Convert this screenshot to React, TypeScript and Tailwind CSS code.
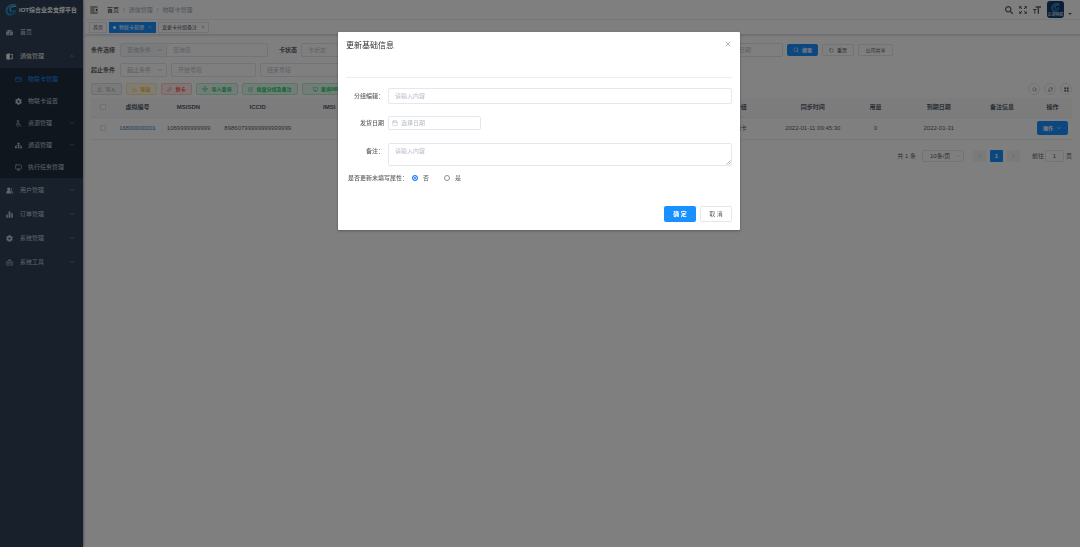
import React from "react";
import {
  Search, RotateCcw, RefreshCw, Upload, Download, Move, Calendar, X, ChevronDown, ChevronUp, ChevronLeft, ChevronRight,
  Link, SquarePen, Monitor, CreditCard,
} from "lucide-react";
import { FaTachometerAlt, FaCog, FaSitemap, FaSearch } from "react-icons/fa";
import { BsFillGridFill } from "react-icons/bs";

type Item = { label: string; icon: React.ReactNode; arrow?: "up" | "down"; bright?: boolean; active?: boolean };

const ic = "size-[7px] shrink-0";

function Glyph({ children, outline = false }: { children: React.ReactNode; outline?: boolean }) {
  return (
    <svg
      viewBox="0 0 24 24"
      className={ic}
      fill={outline ? "none" : "currentColor"}
      stroke={outline ? "currentColor" : "none"}
      strokeWidth="2"
      aria-hidden="true"
    >
      {children}
    </svg>
  );
}

const top: Item[] = [
  { label: "首页", icon: <FaTachometerAlt className={ic} /> },
  {
    label: "通信管理",
    icon: (
      <Glyph>
        <path d="M1 3l12-2v22L1 21z" />
        <path d="M15 3h8v18h-8v-3h5V6h-5z" />
      </Glyph>
    ),
    arrow: "up",
    bright: true,
  },
];
const sub: Item[] = [
  { label: "物联卡管理", icon: <CreditCard className={ic} />, active: true },
  { label: "物联卡设置", icon: <FaCog className={ic} /> },
  {
    label: "资源管理",
    icon: (
      <Glyph outline>
        <circle cx="10" cy="4" r="3" />
        <path d="M10 7v9h7l3 7M10 11h6M6 11c-4 5-1 12 6 11" />
      </Glyph>
    ),
    arrow: "down",
  },
  { label: "通道管理", icon: <FaSitemap className={ic} />, arrow: "down" },
  { label: "执行任务管理", icon: <Monitor className={ic} /> },
];
const bottom: Item[] = [
  {
    label: "用户管理",
    icon: (
      <Glyph>
        <path d="M9 2c3 0 5 2 5 5 0 2-1 4-2 5l5 4v6H1v-6l5-4c-1-1-2-3-2-5 0-3 2-5 5-5z" />
        <path d="M16 3c3 0 4 2 4 4s-1 4-2 5l5 4v6h-4v-7l-4-3c2-3 2-6 1-9z" />
      </Glyph>
    ),
    arrow: "down",
  },
  {
    label: "订单管理",
    icon: (
      <Glyph>
        <path d="M1 12h5v11H1zM9 2h6v21H9zM18 8h5v15h-5z" />
      </Glyph>
    ),
    arrow: "down",
  },
  { label: "系统管理", icon: <FaCog className={ic} />, arrow: "down" },
  {
    label: "系统工具",
    icon: (
      <Glyph outline>
        <path d="M2 21V11l4-5h12l4 5v10zM8 6V3h8v3M2 13h6M16 13h6" />
        <circle cx="12" cy="13" r="3" />
      </Glyph>
    ),
    arrow: "down",
  },
];

function MenuItem({ item, nested = false }: { item: Item; nested?: boolean }) {
  const color = item.active ? "text-[#1890ff]" : item.bright ? "text-[#f4f4f5]" : "text-[#bfcbd9]";
  return (
    <li>
      <a
        href="#"
        className={`flex items-center pr-2 ${color} ${nested ? "h-[22px] gap-[6px] pl-[15px]" : "h-6 gap-[7px] pl-[6px]"}`}
      >
        {item.icon}
        <span className="flex-1 whitespace-nowrap">{item.label}</span>
        {item.arrow === "up" && <ChevronUp className="size-[6px] text-[#a3abb8]" />}
        {item.arrow === "down" && <ChevronDown className="size-[6px] text-[#a3abb8]" />}
      </a>
    </li>
  );
}

function Swirl({ className }: { className: string }) {
  return (
    <svg viewBox="0 0 24 24" className={className} fill="none" strokeLinecap="round" aria-hidden="true">
      <path d="M20 2C11 0 3 6 3 14c0 5 4 8 9 7" stroke="#2b8bc9" strokeWidth="4" />
      <path d="M22 5c-8-1-12 2-12 6 0 4 4 5 7 3" stroke="#57b8e8" strokeWidth="2.5" />
      <path d="M12 22c6-1 9-5 9-10-1 3-4 4-7 3" stroke="#1d6fb0" strokeWidth="3" />
    </svg>
  );
}

function Sidebar() {
  return (
    <aside className="w-[83px] shrink-0 bg-[#304156] shadow-[1px_0_2px_rgba(0,21,41,0.35)]">
      <div className="flex h-5 items-center gap-[2px] pl-[5px]">
        <Swirl className="size-3 shrink-0" />
        <h1 className="whitespace-nowrap font-bold text-white">IOT综合业务支撑平台</h1>
      </div>
      <nav>
        <ul>{top.map((i) => <MenuItem key={i.label} item={i} />)}</ul>
        <ul className="bg-[#1f2d3d]">{sub.map((i) => <MenuItem key={i.label} item={i} nested />)}</ul>
        <ul>{bottom.map((i) => <MenuItem key={i.label} item={i} />)}</ul>
      </nav>
    </aside>
  );
}

function TopBar() {
  return (
    <header>
      <div className="flex h-5 items-center border-b border-[#eef0f3] pl-[7px] pr-2">
        <button type="button" aria-label="折叠菜单" className="text-[#222]">
          <svg viewBox="0 0 24 24" className="size-2" fill="none" stroke="currentColor" strokeWidth="2.5" aria-hidden="true">
            <path d="M1 3h22M1 9h13M1 15h13M1 21h22" />
            <path d="M22 7v10l-6-5z" fill="currentColor" stroke="none" />
          </svg>
        </button>
        <nav aria-label="面包屑" className="ml-[9px] flex flex-1 gap-1 text-[#97a8be]">
          <a href="#" className="text-[#303133]">首页</a>
          <span>/</span>
          <span>通信管理</span>
          <span>/</span>
          <span>物联卡管理</span>
        </nav>
        <div className="flex items-center gap-[6px] text-[#5a5e66]">
          <FaSearch className="size-2" />
          <svg viewBox="0 0 24 24" className="size-2" fill="none" stroke="currentColor" strokeWidth="3" aria-hidden="true">
            <path d="M2 8V2h6M2 2l7 7M16 2h6v6M22 2l-7 7M22 16v6h-6M22 22l-7-7M8 22H2v-6M2 22l7-7" />
          </svg>
          <svg viewBox="0 0 24 24" className="size-2" fill="currentColor" aria-hidden="true">
            <path d="M8 1h16v4h-6v18h-4V5H8zM0 9h11v3H7v11H4V12H0z" />
          </svg>
          <div className="flex h-[17px] w-[17px] flex-col items-center justify-center rounded-[3px] bg-[#0f3d6b]">
            <Swirl className="size-[9px]" />
            <span className="text-[4px] leading-[5px] text-white">云湖物联</span>
          </div>
          <span className="-ml-[2px] mt-2 border-x-2 border-t-2 border-x-transparent border-t-[#5a5e66]" />
        </div>
      </div>
      <div className="flex h-[15px] items-center gap-[2px] border-b border-[#d8dce5] pl-[6px] shadow-[0_1px_2px_rgba(0,0,0,0.12)]">
        <a href="#" className="flex h-[11px] items-center border border-[#e4e7ed] px-[3px] text-[5px] text-[#495060]">首页</a>
        <a href="#" className="flex h-[11px] items-center gap-[3px] bg-[#1890ff] px-1 text-[5px] text-white">
          <span className="size-[3px] rounded-full bg-white" />
          物联卡管理
          <X className="ml-px size-[4px]" />
        </a>
        <a href="#" className="flex h-[11px] items-center gap-1 border border-[#e4e7ed] px-[3px] text-[5px] text-[#495060]">
          变更卡分组备注
          <X className="size-[4px]" />
        </a>
      </div>
    </header>
  );
}

const field = "h-[14px] min-w-0 rounded-[2px] border border-[#e4e7ed] bg-white px-[6px] placeholder:text-[#c0c4cc]";

function FilterSelect({ label, className, tint = false }: { label: string; className: string; tint?: boolean }) {
  return (
    <div className={`relative ${className}`}>
      <select
        aria-label={label}
        className={`block h-[14px] w-full appearance-none border border-[#e4e7ed] pl-[6px] text-[#b4bac4] ${tint ? "rounded-l-[2px] bg-[#f5f7fa]" : "rounded-[2px] bg-white"}`}
      >
        <option>{label}</option>
      </select>
      <ChevronDown className="pointer-events-none absolute right-1 top-1 size-[6px] text-[#a8adb8]" strokeWidth={2.5} />
    </div>
  );
}

const outline = "ml-1 flex h-3 items-center justify-center gap-[3px] rounded-[2px] border border-[#e4e7ed] text-[5px] text-[#606266]";

function Filters() {
  return (
    <form className="flex flex-col gap-[6px]">
      <div className="flex items-center">
        <label htmlFor="cond" className="w-[29px] shrink-0 whitespace-nowrap font-bold text-[#606266]">条件选择</label>
        <FilterSelect label="查询条件" className="w-[47px]" tint />
        <input id="cond" placeholder="查询值" className="-ml-px h-[14px] w-[102px] rounded-r-[2px] border border-[#e4e7ed] px-[6px] placeholder:text-[#c0c4cc]" />
        <label htmlFor="state" className="ml-[11px] w-[22px] whitespace-nowrap font-bold text-[#606266]">卡状态</label>
        <input id="state" placeholder="卡状态" className={`${field} w-[90px]`} />
        <div className="min-w-0 flex-1" />
        <input aria-label="到期日期" placeholder="到期日期" className={`${field} w-[63px]`} />
        <button type="button" className="ml-1 flex h-3 w-[31px] items-center justify-center gap-[3px] rounded-[2px] bg-[#1890ff] text-[5px] font-bold text-white">
          <Search className="size-[6px]" />搜索
        </button>
        <button type="button" className={`${outline} w-8`}>
          <RotateCcw className="size-[5px]" />重置
        </button>
        <button type="button" className={`${outline} mr-[179px] w-[35px]`}>公司共享</button>
      </div>
      <div className="flex items-center">
        <label htmlFor="from" className="w-[29px] shrink-0 whitespace-nowrap font-bold text-[#606266]">起止条件</label>
        <FilterSelect label="起止条件" className="w-[47px]" />
        <input id="from" placeholder="开始号段" className={`${field} ml-1 w-[85px]`} />
        <input aria-label="结束号段" placeholder="结束号段" className={`${field} ml-1 w-[85px]`} />
      </div>
    </form>
  );
}

const tool = "flex h-3 items-center justify-center gap-[3px] whitespace-nowrap rounded-[2px] border text-[5px]";
const green = "border-[#b4ecd0] bg-[#e7faf0] text-[#13ce66] font-bold";
const round = "flex size-3 items-center justify-center rounded-full border border-[#e4e7ed] text-[#606266]";

function Toolbar() {
  return (
    <div className="mt-[6px] flex items-center gap-1">
      <button type="button" className={`${tool} w-[31px] border-[#dedfe1] bg-[#f4f4f5] text-[#909399]`}><Upload className="size-[5px]" />导入</button>
      <button type="button" className={`${tool} w-[31px] border-[#ffe9b0] bg-[#fff8e6] font-bold text-[#ffba00]`}><Download className="size-[5px]" />导出</button>
      <button type="button" className={`${tool} w-[31px] border-[#ffc8c8] bg-[#ffeded] font-bold text-[#ff4949]`}><Link className="size-[5px]" />划卡</button>
      <button type="button" className={`${tool} w-[42px] ${green}`}><Move className="size-[6px]" />导入查询</button>
      <button type="button" className={`${tool} w-[56px] ${green}`}><SquarePen className="size-[5px]" />批量分组及备注</button>
      <button type="button" className={`${tool} w-[50px] ${green}`}><Monitor className="size-[5px]" />查询IMEI</button>
      <div className="ml-auto flex gap-1">
        <button type="button" aria-label="搜索" className={round}><Search className="size-[5px]" /></button>
        <button type="button" aria-label="刷新" className={round}><RefreshCw className="size-[5px]" /></button>
        <button type="button" aria-label="显示列" className={round}><BsFillGridFill className="size-[5px]" /></button>
      </div>
    </div>
  );
}

const columns: { head: string; value: React.ReactNode; width: string }[] = [
  { head: "虚拟编号", value: <a href="#" className="text-[#337ab7]">16800000001</a>, width: "w-[4.8%]" },
  { head: "MSISDN", value: "1069999999999", width: "w-[5.6%]" },
  { head: "ICCID", value: "89860799999999999999", width: "w-[8.5%]" },
  { head: "IMSI", value: "", width: "w-[6.1%]" },
  { head: "运营商", value: "中国移动", width: "" },
  { head: "状态", value: "正常", width: "" },
  { head: "所属分组", value: "物联网卡", width: "w-[9.4%]" },
  { head: "同步时间", value: "2022-01-11 09:45:30", width: "w-[6.5%]" },
  { head: "用量", value: "0", width: "w-[6.3%]" },
  { head: "到期日期", value: "2022-01-31", width: "w-[6.6%]" },
  { head: "备注信息", value: "", width: "w-[6.3%]" },
];

const tick = "mx-auto block size-[6px] appearance-none rounded-[1px] border border-[#dcdfe6] bg-white";

function DataTable() {
  return (
    <table className="mt-[3px] w-full table-fixed text-center text-[#606266]">
      <thead className="bg-[#f8f8f9] text-[#515a6e]">
        <tr className="h-[19px] border-b border-[#ebeef5]">
          <th className="w-[23px]"><input type="checkbox" aria-label="全选" className={tick} /></th>
          {columns.map((c) => <th key={c.head} className={`${c.width} whitespace-nowrap`}>{c.head}</th>)}
          <th className="w-[39px]">操作</th>
        </tr>
      </thead>
      <tbody>
        <tr className="h-[22px] border-b border-[#ebeef5]">
          <td><input type="checkbox" aria-label="选择" className={tick} /></td>
          {columns.map((c) => <td key={c.head} className="whitespace-nowrap">{c.value}</td>)}
          <td>
            <button type="button" className="mx-auto flex h-[14px] w-[31px] items-center justify-center gap-[3px] rounded-[2px] bg-[#1890ff] text-[5px] font-bold text-white">
              操作<ChevronDown className="size-[6px]" />
            </button>
          </td>
        </tr>
      </tbody>
    </table>
  );
}

function Pager() {
  const box = "flex h-3 w-[13px] items-center justify-center rounded-[1px]";
  return (
    <div className="mt-[10px] flex items-center justify-end text-[#606266]">
      <span className="mr-[6px]">共 1 条</span>
      <div className="relative mr-[9px]">
        <select aria-label="每页条数" className="block h-3 w-[42px] appearance-none rounded-[2px] border border-[#e4e7ed] pl-[7px]">
          <option>10条/页</option>
        </select>
        <ChevronDown className="pointer-events-none absolute right-[3px] top-[3px] size-[6px] text-[#c0c4cc]" />
      </div>
      <div className="flex gap-1">
        <button type="button" aria-label="上一页" className={`${box} bg-[#f4f4f5] text-[#b4b8c0]`}><ChevronLeft className="size-[7px]" /></button>
        <button type="button" className={`${box} bg-[#1890ff] font-bold text-white`}>1</button>
        <button type="button" aria-label="下一页" className={`${box} bg-[#f4f4f5] text-[#b4b8c0]`}><ChevronRight className="size-[7px]" /></button>
      </div>
      <label htmlFor="page" className="ml-3 mr-px">前往</label>
      <input id="page" defaultValue="1" className="mr-[2px] h-3 w-[19px] rounded-[2px] border border-[#e4e7ed] text-center" />
      <span>页</span>
    </div>
  );
}

function Dialog() {
  const control = "rounded-[2px] border border-[#e4e7ed] px-[6px] placeholder:text-[#b4bac6]";
  const label = "w-[42px] shrink-0 whitespace-nowrap pr-1 text-right font-medium text-[#606266]";
  return (
    <div role="dialog" aria-modal="true" aria-labelledby="dialog-title" className="mt-8 w-[402px] rounded-[1px] bg-white px-2 pb-2 shadow-[0_1px_3px_rgba(0,0,0,0.3)]">
      <div className="flex items-start justify-between pt-2">
        <h2 id="dialog-title" className="text-[8px] leading-3 text-[#303133]">更新基础信息</h2>
        <button type="button" aria-label="关闭" className="text-[#909399]"><X className="size-2" strokeWidth={2} /></button>
      </div>
      <hr className="mt-[25px] border-[#ebeef5]" />
      <form>
        <div className="mt-[10px] flex items-center">
          <label htmlFor="group" className={label}>分组编辑：</label>
          <input id="group" placeholder="请输入内容" className={`${control} h-4 min-w-0 flex-1`} />
        </div>
        <div className="mt-3 flex items-center">
          <label htmlFor="date" className={label}>发货日期</label>
          <div className="relative">
            <input id="date" placeholder="选择日期" className="block h-[14px] w-[93px] rounded-[2px] border border-[#e4e7ed] pl-3 placeholder:text-[#b4bac6]" />
            <Calendar className="absolute left-1 top-1 size-[6px] text-[#b4bac6]" />
          </div>
        </div>
        <div className="mt-[13px] flex items-start">
          <label htmlFor="remark" className={`${label} pt-1`}>备注：</label>
          <div className="relative min-w-0 flex-1">
            <textarea id="remark" placeholder="请输入内容" className={`${control} block h-[23px] w-full resize-none py-[3px]`} />
            <svg viewBox="0 0 10 10" className="absolute bottom-px right-px size-[5px]" stroke="#a0a3a8" strokeWidth="1.5" aria-hidden="true">
              <path d="M1 9 9 1M5 9l4-4" />
            </svg>
          </div>
        </div>
        <fieldset className="mt-2 flex h-2 items-center text-[#606266]">
          <legend className="float-left w-[66px] whitespace-nowrap pl-[2px] font-medium leading-2">是否更新未填写属性：</legend>
          <label className="flex items-center gap-[5px]">
            <input type="radio" name="blank" defaultChecked className="size-[6px] appearance-none rounded-full border border-[#1677ff] bg-[#1677ff] shadow-[inset_0_0_0_1px_white]" />否
          </label>
          <label className="ml-[15px] flex items-center gap-[5px]">
            <input type="radio" name="blank" className="size-[6px] appearance-none rounded-full border border-[#909090]" />是
          </label>
        </fieldset>
      </form>
      <div className="mt-6 flex justify-end gap-1">
        <button type="button" className="h-4 w-8 rounded-[2px] bg-[#1890ff] font-bold text-white">确 定</button>
        <button type="button" className="h-4 w-8 rounded-[2px] border border-[#e4e7ed] text-[#606266]">取 消</button>
      </div>
    </div>
  );
}

export default function App() {
  return (
    <div className="relative min-h-screen bg-white font-['Liberation_Sans','Noto_Sans_CJK_SC',sans-serif] text-[6px] leading-[8px]">
      <div className="flex min-h-screen">
        <Sidebar />
        <div className="min-w-0 flex-1">
          <TopBar />
          <main className="px-2 pt-2">
            <Filters />
            <Toolbar />
            <DataTable />
            <Pager />
          </main>
        </div>
      </div>
      <div className="fixed inset-0 flex items-start justify-center bg-black/50 pr-0.5">
        <Dialog />
      </div>
    </div>
  );
}
